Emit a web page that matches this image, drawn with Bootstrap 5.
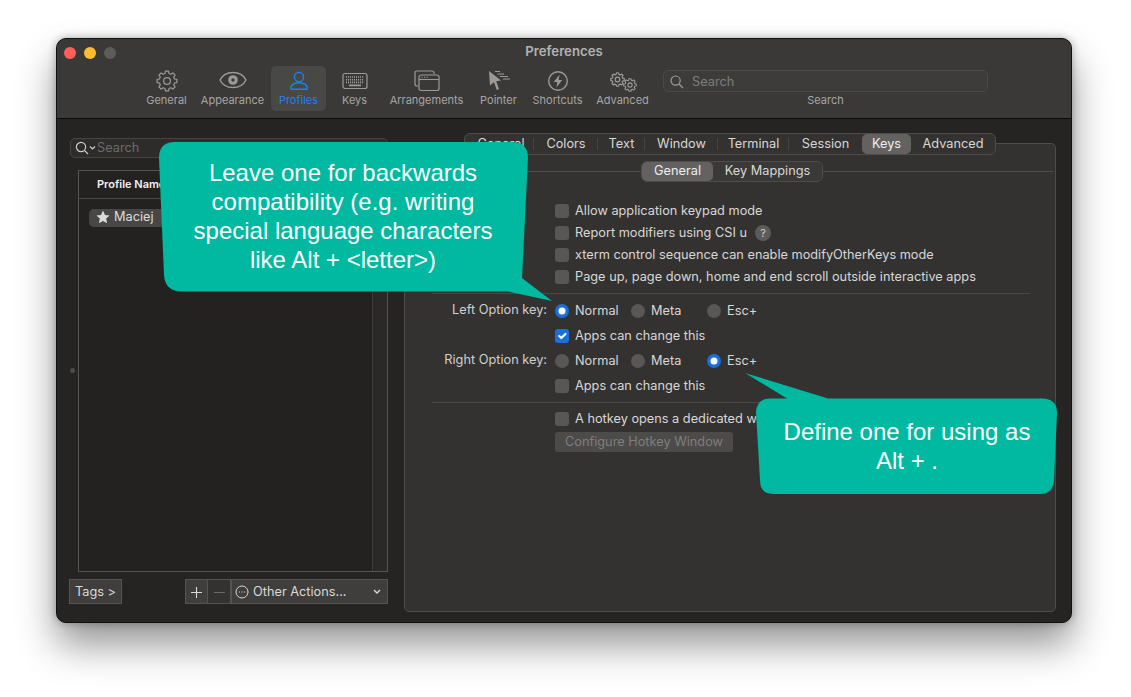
<!DOCTYPE html>
<html lang="en">
<head>
    <meta charset="UTF-8">
    <meta name="viewport" content="width=device-width, initial-scale=1">
    <title>Preferences</title>
    <link href="https://cdn.jsdelivr.net/npm/bootstrap@5.3.0/dist/css/bootstrap.min.css" rel="stylesheet">
    <style>
        html, body { height: 100%; }
        body {
            background: #fff;
            font-family: Inter, "Noto Sans", sans-serif;
            font-size: 12.75px;
            color: #d8d7d6;
            overflow: hidden;
            position: relative;
        }
        .stage { padding: 38px 59px 0 56px; }
        .mac-win {
            height: 585px;
            border: 1px solid #111;
            border-radius: 10px;
            background: #252423;
            box-shadow: 0 22px 38px rgba(0,0,0,.42), 0 0 8px rgba(0,0,0,.3);
            overflow: hidden;
        }

        /* toolbar */
        .tb { height: 80px; background: #3a3938; border-bottom: 1px solid #0c0c0c; padding-left: 82px; }
        .titlerow { height: 27px; margin-left: -82px; padding: 0 7px; }
        .titlerow > .side { flex: 1; }
        .titlerow .ttl { font-weight: 600; font-size: 13.2px; color: #b3b2b1; padding-bottom: 2px; }
        .lamp { width: 12px; height: 12px; border-radius: 50%; margin-right: 8px; }
        .tb-item { height: 45px; padding-top: 4px; border-radius: 5px; color: #a6a5a4; font-size: 11px; line-height: 16px; }
        .tb-item svg { display: block; height: 22px; color: #9b9a99; }
        .tb-item.on { background: #484847; color: #1f80ec; }
        .tb-item.on svg { color: #1f80ec; }
        .tb-item:nth-child(1) { width: 55px; }
        .tb-item:nth-child(2) { width: 77px; }
        .tb-item:nth-child(3) { width: 55px; }
        .tb-item:nth-child(4) { width: 57px; }
        .tb-item:nth-child(5) { width: 87px; }
        .tb-item:nth-child(6) { width: 57px; }
        .tb-item:nth-child(7) { width: 61px; }
        .tb-item:nth-child(8) { width: 69px; }
        .tb-search { width: 325px; margin-left: 6px; padding-top: 4px; font-size: 11px; color: #a6a5a4; line-height: 16px; }
        .tb-field { height: 22px; border: 1px solid #4a4948; border-radius: 5px; background: #3d3c3b; color: #7d7c7b; font-size: 12.75px; padding: 1px 0 0 6px; }

        /* left pane */
        .leftpane { width: 318px; margin-left: 13px; padding-top: 19px; }
        .sfield { height: 20px; border: 1px solid #464544; border-radius: 5px; background: #2d2c2b; color: #6c6b6a; padding-left: 4px; }
        .ptable { height: 402px; margin: 12px 0 7px 8px; border: 1px solid #555453; background: #232221; }
        .ptable-main { min-width: 0; }
        .phead { height: 28px; padding-left: 18px; border-bottom: 1px solid #4a4948; color: #f0f0f0; font-weight: 600; font-size: 11px; }
        .pill { height: 18px; margin: 10px 8px 0 10px; padding: 0 0 2px 7px; border-radius: 5px; background: #474746; color: #dcdbda; }
        .pscroll { width: 15px; border-left: 1px solid #3e3d3c; background: #2a2928; }
        .sq-btn {
            height: 25px; padding: 1px 0 0; border: 1px solid #555453; border-radius: 0;
            background: #3f3e3d; color: #dad9d8; font-size: 12.75px; line-height: 1;
        }
        .sq-btn.tags { width: 53px; margin-left: -1px; }
        .sq-btn.plus { width: 23px; }
        .sq-btn.minus { width: 23px; background: #333231; border-left: 0; color: #6b6a69; }
        .sq-btn.acts { width: 157px; border-left: 1px solid #555453; padding: 1px 5px 0 3px; }
        .grip { width: 5px; height: 5px; border-radius: 50%; background: #4b4a49; left: 13px; top: 249px; }

        /* right pane */
        .rightpane { width: 652px; margin-left: 16px; padding-top: 14px; }
        .tabbar {
            width: 532px; height: 22px; padding-left: 3px; z-index: 1;
            border: 1px solid #4e4d4c; border-radius: 6px; background: #333231;
            color: #d8d7d6;
        }
        .tabx { line-height: 20px; text-align: center; position: relative; }
        .tabx:not(:last-child)::after {
            content: ""; position: absolute; right: 0; top: 4px; height: 12px; width: 1px; background: #454443;
        }
        .tabx.on { background: #636261; border-radius: 5px; color: #eee; }
        .tabx.on::after, .tabx.nosep::after { display: none; }
        .tabx:nth-child(1) { width: 66px; }
        .tabx:nth-child(2) { width: 64px; }
        .tabx:nth-child(3) { width: 47px; }
        .tabx:nth-child(4) { width: 73px; }
        .tabx:nth-child(5) { width: 71px; }
        .tabx:nth-child(6) { width: 73px; }
        .tabx:nth-child(7) { width: 49px; }
        .tabx:nth-child(8) { width: 84px; }
        .tabbox { height: 469px; margin-top: -12px; padding-top: 17px; border: 1px solid #4e4d4c; border-radius: 5px; background: #333231; }
        .subline { flex: 1; height: 1px; background: #4e4d4c; margin-right: 2px; }
        .subline.lead { flex: none; width: 233px; margin: 0 0 0 3px; }
        .subtabs { width: 182px; height: 21px; border: 1px solid #4e4d4c; border-radius: 6px; background: #3a3938; }
        .subx { line-height: 18px; text-align: center; }
        .subx.on { width: 71px; background: #636261; border-radius: 5px; color: #eee; }
        .subx.off { flex: 1; }

        .prefgrid { display: grid; grid-template-columns: 142px 1fr; column-gap: 8px; margin-top: 18px; }
        .prefgrid .lbl { text-align: right; line-height: 20px; height: 22px; color: #d0cfce; }
        .pref { height: 22px; }
        .pref.gap3 { margin-bottom: 3px; }
        .pref label { display: flex; align-items: center; gap: 6px; }
        .pref label.opt { width: 76px; }
        .macbox.form-check-input {
            width: 14px; height: 14px; margin: 0; flex: none; border: 0;
            background-color: #585756; box-shadow: none;
        }
        .macbox.form-check-input:checked { background-color: #1b6fd9; }
        .macbox.form-check-input[type=checkbox] { border-radius: 3px; }
        .qmark { width: 16px; height: 16px; margin-left: 8px; border-radius: 50%; background: #5c5b5a; color: #cfcecd; font-size: 11px; line-height: 16px; text-align: center; }
        .sepline { grid-column: 1 / 3; height: 1px; background: #4a4948; margin: 5px 25px 5px 27px; }
        .sepline.first { margin-bottom: 6px; }
        .sepline.second { margin-bottom: 5px; }
        .btn.ghostbtn:disabled { width: 178px; height: 20px; margin-top: 2px; padding: 0; border: 0; border-radius: 3px; background: #4c4b4a; color: #7f7e7d; opacity: 1; font-size: 12.75px; line-height: 20px; }

        /* callouts */
        .bubble { position: absolute; z-index: 5; }
        .bubble svg { position: absolute; left: 0; top: 0; }
        .bubble-txt {
            position: absolute; text-align: center; color: #fff;
            font-family: "Liberation Sans", Arial, sans-serif; font-size: 24px; line-height: 29px;
        }
        .bubble.one { left: 155px; top: 138px; width: 402px; height: 168px; }
        .bubble.one .bubble-txt { left: 12px; width: 352px; top: 20px; }
        .bubble.two { left: 742px; top: 370px; width: 318px; height: 128px; }
        .bubble.two .bubble-txt { left: 20px; width: 290px; top: 47px; }
    </style>
</head>
<body>
    <svg width="0" height="0" class="position-absolute">
        <symbol id="gear" viewBox="-11 -11 22 22">
            <polygon fill="none" stroke="currentColor" stroke-width="1.2" stroke-linejoin="round" points="-2.02,-7.53 -1.56,-9.88 1.56,-9.88 2.02,-7.53 3.9,-6.75 5.88,-8.09 8.09,-5.88 6.75,-3.9 7.53,-2.02 9.88,-1.56 9.88,1.56 7.53,2.02 6.75,3.9 8.09,5.88 5.88,8.09 3.9,6.75 2.02,7.53 1.56,9.88 -1.56,9.88 -2.02,7.53 -3.9,6.75 -5.88,8.09 -8.09,5.88 -6.75,3.9 -7.53,2.02 -9.88,1.56 -9.88,-1.56 -7.53,-2.02 -6.75,-3.9 -8.09,-5.88 -5.88,-8.09 -3.9,-6.75"/>
            <circle r="3.4" fill="none" stroke="currentColor" stroke-width="1.2"/>
        </symbol>
        <symbol id="gear-sm" viewBox="-11 -11 22 22">
            <polygon fill="none" stroke="currentColor" stroke-width="1.7" stroke-linejoin="round" points="-2.02,-7.53 -1.56,-9.88 1.56,-9.88 2.02,-7.53 3.9,-6.75 5.88,-8.09 8.09,-5.88 6.75,-3.9 7.53,-2.02 9.88,-1.56 9.88,1.56 7.53,2.02 6.75,3.9 8.09,5.88 5.88,8.09 3.9,6.75 2.02,7.53 1.56,9.88 -1.56,9.88 -2.02,7.53 -3.9,6.75 -5.88,8.09 -8.09,5.88 -6.75,3.9 -7.53,2.02 -9.88,1.56 -9.88,-1.56 -7.53,-2.02 -6.75,-3.9 -8.09,-5.88 -5.88,-8.09 -3.9,-6.75"/>
            <circle r="3.4" fill="none" stroke="currentColor" stroke-width="1.7"/>
        </symbol>
    </svg>

    <div class="stage">
        <div class="mac-win">
            <div class="tb">
                <div class="titlerow d-flex align-items-center">
                    <div class="side d-flex">
                        <span class="lamp" style="background:#ff5f57"></span>
                        <span class="lamp" style="background:#febc2e"></span>
                        <span class="lamp" style="background:#5d5c5b"></span>
                    </div>
                    <div class="ttl">Preferences</div>
                    <div class="side"></div>
                </div>
                <div class="d-flex">
                    <div class="d-flex">
                        <div class="tb-item d-flex flex-column align-items-center">
                            <svg width="22" viewBox="0 0 22 22"><use href="#gear" width="22" height="22"/></svg>
                            General
                        </div>
                        <div class="tb-item d-flex flex-column align-items-center">
                            <svg width="28" viewBox="0 0 28 22" fill="none" stroke="currentColor" stroke-width="1.4"><path d="M1 10C6 0 22 0 27 10C22 20 6 20 1 10Z"/><circle cx="14" cy="10" r="4.8" fill="currentColor" stroke="none"/><circle cx="14" cy="10" r="1.7" fill="#3a3938" stroke="none"/></svg>
                            Appearance
                        </div>
                        <div class="tb-item on d-flex flex-column align-items-center">
                            <svg width="20" viewBox="0 0 20 22" fill="none" stroke="currentColor" stroke-width="1.4"><circle cx="10" cy="7" r="4.6"/><path d="M2 19.3C1 15 5 12.8 10 12.8C15 12.8 19 15 18 19.3Z" stroke-linejoin="round"/></svg>
                            Profiles
                        </div>
                        <div class="tb-item d-flex flex-column align-items-center">
                            <svg width="26" viewBox="0 0 26 22" fill="none" stroke="currentColor"><rect x="1" y="3.5" width="24" height="15" rx="2" stroke-width="1.2"/><path d="M4 7H22M4 9.7H22M4 12.4H22" stroke-width="1.6" stroke-dasharray="1.1 .9"/><path d="M7 15.4H19" stroke-width="1.6"/></svg>
                            Keys
                        </div>
                        <div class="tb-item d-flex flex-column align-items-center">
                            <svg width="26" viewBox="0 0 26 22" fill="none" stroke="currentColor" stroke-width="1.2"><path d="M4 16H3Q1 16 1 14V3Q1 1 3 1H18Q20 1 20 3V4"/><rect x="5" y="5" width="20" height="15.5" rx="2"/><path d="M5 9.5H25"/><path d="M7.5 7.3H8.7M10 7.3H11.2M12.5 7.3H13.7" stroke-width="1.1"/></svg>
                            Arrangements
                        </div>
                        <div class="tb-item d-flex flex-column align-items-center">
                            <svg width="22" viewBox="0 0 22 22"><path d="M1 1L13 10.5L8.2 11.2L11 19L8.8 20L6 12.3L2 15.5Z" fill="currentColor"/><path d="M7 1.5H12M9.5 4H16M12 6.5H20M15 9H22" stroke="currentColor" stroke-width="1"/></svg>
                            Pointer
                        </div>
                        <div class="tb-item d-flex flex-column align-items-center">
                            <svg width="22" viewBox="0 0 22 22"><circle cx="11" cy="11" r="9.3" fill="none" stroke="currentColor" stroke-width="1.4"/><path d="M12.6 4.5L6.8 12H10.4L9.4 17.5L15.2 10H11.6Z" fill="currentColor"/></svg>
                            Shortcuts
                        </div>
                        <div class="tb-item d-flex flex-column align-items-center">
                            <svg width="28" viewBox="0 0 28 22"><use href="#gear-sm" x="1" y="2" width="15" height="15"/><use href="#gear-sm" x="14" y="8" width="14" height="14"/></svg>
                            Advanced
                        </div>
                    </div>
                    <div class="tb-search text-center">
                        <div class="tb-field d-flex align-items-center gap-2 text-start">
                            <svg width="14" height="14" viewBox="0 0 14 14" fill="none" stroke="#9b9a99" stroke-width="1.2"><circle cx="5.6" cy="5.6" r="4.6"/><path d="M9 9L13 13"/></svg>
                            Search
                        </div>
                        Search
                    </div>
                </div>
            </div>

            <div class="d-flex position-relative">
                <div class="grip position-absolute"></div>
                <div class="leftpane">
                    <div class="sfield d-flex align-items-center">
                        <svg width="22" height="14" viewBox="0 0 22 14" fill="none" stroke="#cfcecd" stroke-width="1.2"><circle cx="6" cy="6" r="4.6"/><path d="M9.4 9.4L13 13M15 5.5L17.5 8L20 5.5"/></svg>
                        Search
                    </div>
                    <div class="ptable d-flex">
                        <div class="ptable-main flex-grow-1">
                            <div class="phead d-flex align-items-center">Profile Name</div>
                            <div class="pill d-flex align-items-center gap-1">
                                <svg width="14" height="14" viewBox="0 0 24 24" fill="#dcdbda"><path d="M12 1L15.4 8.5L23.4 9.3L17.4 14.7L19.1 22.8L12 18.7L4.9 22.8L6.6 14.7L.6 9.3L8.6 8.5Z"/></svg>
                                Maciej
                            </div>
                        </div>
                        <div class="pscroll"></div>
                    </div>
                    <div class="d-flex">
                        <button class="btn sq-btn tags">Tags &gt;</button>
                        <div class="d-flex ms-auto">
                            <button class="btn sq-btn plus"><svg width="11" height="11" viewBox="0 0 11 11" stroke="#dad9d8" stroke-width="1.1"><path d="M5.5 0V11M0 5.5H11"/></svg></button>
                            <button class="btn sq-btn minus"><svg width="11" height="11" viewBox="0 0 11 11" stroke="#6b6a69" stroke-width="1.1"><path d="M0 5.5H11"/></svg></button>
                            <button class="btn sq-btn acts d-flex align-items-center">
                                <svg class="me-1" width="14" height="14" viewBox="0 0 14 14" fill="none" stroke="#dad9d8" stroke-width="1"><circle cx="7" cy="7" r="6"/><path d="M3.9 7H4.9M6.5 7H7.5M9.1 7H10.1" stroke-width="1.1"/></svg>
                                <span>Other Actions...</span>
                                <svg class="ms-auto" width="10" height="8" viewBox="0 0 10 8" fill="none" stroke="#dad9d8" stroke-width="1.4"><path d="M2 2L5 5L8 2"/></svg>
                            </button>
                        </div>
                    </div>
                </div>

                <div class="rightpane">
                    <div class="d-flex justify-content-center">
                        <div class="tabbar d-flex position-relative">
                            <div class="tabx">General</div>
                            <div class="tabx">Colors</div>
                            <div class="tabx">Text</div>
                            <div class="tabx">Window</div>
                            <div class="tabx">Terminal</div>
                            <div class="tabx nosep">Session</div>
                            <div class="tabx on">Keys</div>
                            <div class="tabx">Advanced</div>
                        </div>
                    </div>
                    <div class="tabbox">
                        <div class="d-flex align-items-center">
                            <div class="subline lead"></div>
                            <div class="subtabs d-flex">
                                <div class="subx on">General</div>
                                <div class="subx off">Key Mappings</div>
                            </div>
                            <div class="subline"></div>
                        </div>
                        <div class="prefgrid">
                            <div></div>
                            <div class="pref d-flex align-items-center"><label><input class="form-check-input macbox" type="checkbox">Allow application keypad mode</label></div>
                            <div></div>
                            <div class="pref d-flex align-items-center"><label><input class="form-check-input macbox" type="checkbox">Report modifiers using CSI u</label><span class="qmark">?</span></div>
                            <div></div>
                            <div class="pref d-flex align-items-center"><label><input class="form-check-input macbox" type="checkbox">xterm control sequence can enable modifyOtherKeys mode</label></div>
                            <div></div>
                            <div class="pref d-flex align-items-center"><label><input class="form-check-input macbox" type="checkbox">Page up, page down, home and end scroll outside interactive apps</label></div>
                            <div class="sepline first"></div>

                            <div class="lbl">Left Option key:</div>
                            <div class="pref gap3 d-flex align-items-center">
                                <label class="opt"><input class="form-check-input macbox" type="radio" name="leftopt" checked>Normal</label>
                                <label class="opt"><input class="form-check-input macbox" type="radio" name="leftopt">Meta</label>
                                <label class="opt"><input class="form-check-input macbox" type="radio" name="leftopt">Esc+</label>
                            </div>
                            <div></div>
                            <div class="pref gap3 d-flex align-items-center"><label><input class="form-check-input macbox" type="checkbox" checked>Apps can change this</label></div>

                            <div class="lbl">Right Option key:</div>
                            <div class="pref gap3 d-flex align-items-center">
                                <label class="opt"><input class="form-check-input macbox" type="radio" name="rightopt">Normal</label>
                                <label class="opt"><input class="form-check-input macbox" type="radio" name="rightopt">Meta</label>
                                <label class="opt"><input class="form-check-input macbox" type="radio" name="rightopt" checked>Esc+</label>
                            </div>
                            <div></div>
                            <div class="pref d-flex align-items-center"><label><input class="form-check-input macbox" type="checkbox">Apps can change this</label></div>
                            <div class="sepline second"></div>

                            <div></div>
                            <div class="pref d-flex align-items-center"><label><input class="form-check-input macbox" type="checkbox">A hotkey opens a dedicated window</label></div>
                            <div></div>
                            <div><button class="btn ghostbtn" disabled>Configure Hotkey Window</button></div>
                        </div>
                    </div>
                </div>
            </div>
        </div>
    </div>

    <div class="bubble one">
        <svg width="402" height="168" viewBox="155 138 402 168"><path fill="#00b9a0" d="M175 142H512Q528 142 528 158L522 278L552 301L508 291.5H182Q165 291.5 164 275L159 158Q159 142 175 142Z"/></svg>
        <div class="bubble-txt">Leave one for backwards<br>compatibility (e.g. writing<br>special language characters<br>like Alt + &lt;letter&gt;)</div>
    </div>
    <div class="bubble two">
        <svg width="318" height="128" viewBox="742 370 318 128"><path fill="#00b9a0" d="M745 373L828 398.5H1042Q1057 398.5 1057 413L1054 480Q1053 494 1040 494H773Q760 494 760 480L756 412Q757 398.5 770 398.5H787Z"/></svg>
        <div class="bubble-txt">Define one for using as<br>Alt + .</div>
    </div>

    <script src="https://cdn.jsdelivr.net/npm/bootstrap@5.3.0/dist/js/bootstrap.bundle.min.js"></script>
</body>
</html>
